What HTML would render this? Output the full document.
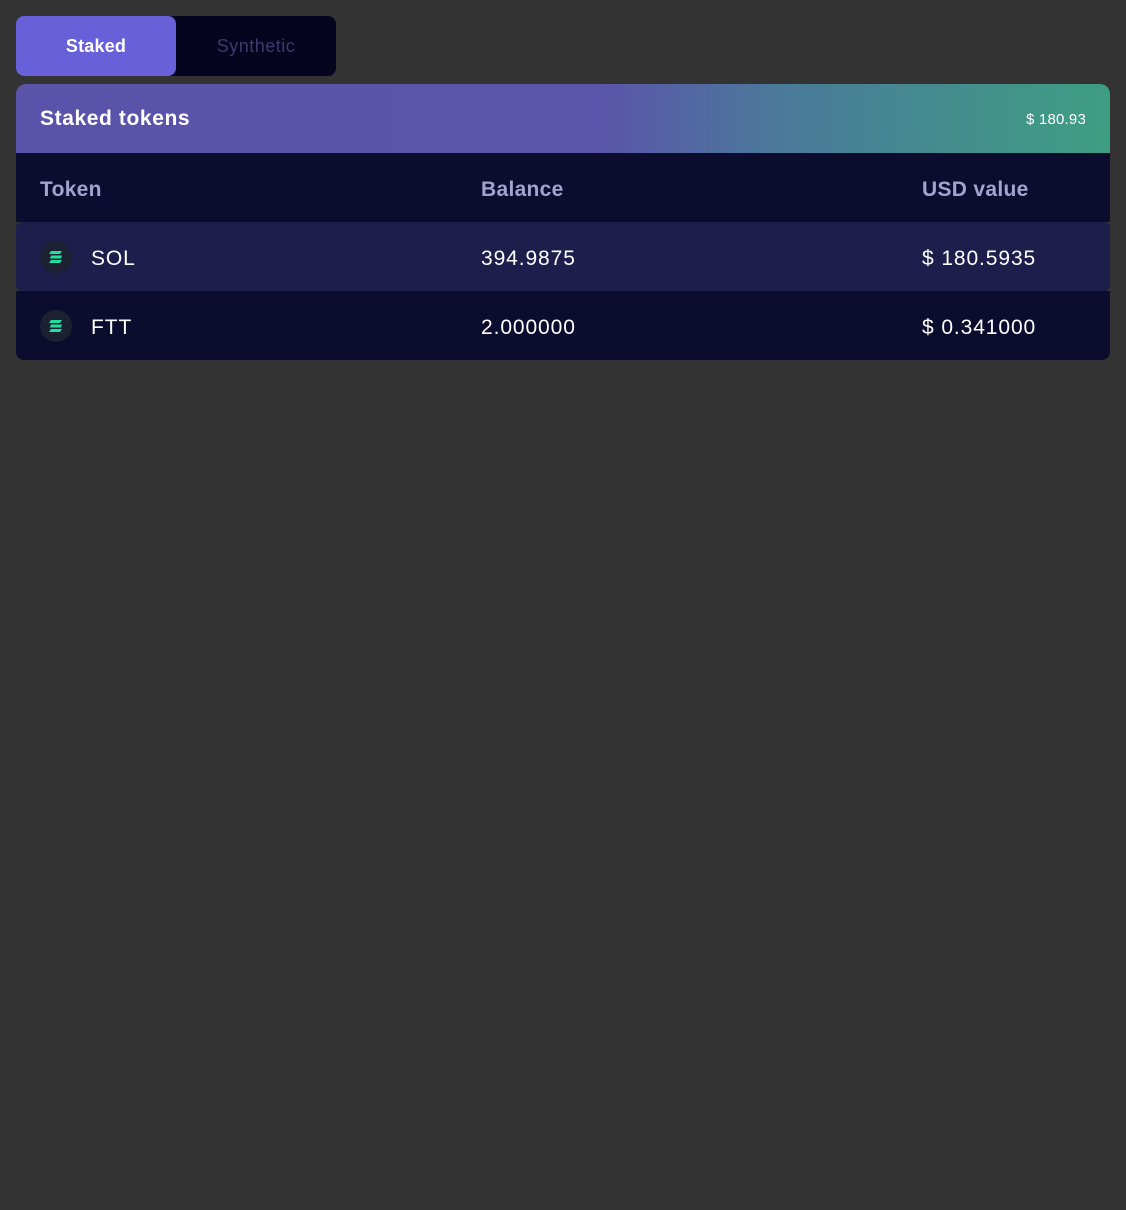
<!DOCTYPE html>
<html><head><style>
body{margin:0;background:#333333;width:1126px;height:1210px;font-family:"Liberation Sans",sans-serif;position:relative}
.tabs{position:absolute;left:16px;top:16px;width:320px;height:60px;background:#06051f;border-radius:8px}
.tab{position:absolute;top:0;width:160px;height:60px;line-height:61px;text-align:center;font-size:18px;border-radius:8px}
.t1{left:0;background:#6860d8;color:#fff;font-weight:bold;letter-spacing:0.2px}
.t2{left:160px;color:#3d3a6e;letter-spacing:0.5px}
.card{position:absolute;left:16px;top:84px;width:1094px}
.hd{height:69px;border-radius:10px 10px 0 0;background:linear-gradient(90deg,#5b52aa 0%,#5b54aa 53%,#4a7a9a 70%,#3e9e82 100%);position:relative}
.hd .t{position:absolute;left:24px;top:23px;color:#fff;font-weight:bold;font-size:21px;letter-spacing:0.6px}
.hd .v{position:absolute;right:24px;top:27px;color:#fff;font-size:15px;letter-spacing:0.2px}
.row{height:69px;position:relative;font-size:21px;letter-spacing:0.9px}
.row span{position:absolute;top:25px}
.th{background:#0c0d2e;color:#a3a3cf;font-weight:bold;letter-spacing:0.3px}
.r1{background:#1e1e4c;color:#fff;border-radius:6px}
.r2{background:#0c0d2e;color:#fff;border-radius:0 0 8px 8px}
.ic{position:absolute;left:24px;top:19px;width:32px;height:32px;border-radius:50%;background:#1c2030}
</style></head><body>
<div class="tabs"><div class="tab t1">Staked</div><div class="tab t2">Synthetic</div></div>
<div class="card">
<div class="hd"><div class="t">Staked tokens</div><div class="v">$ 180.93</div></div>
<div class="row th"><span style="left:24px">Token</span><span style="left:465px">Balance</span><span style="left:906px">USD value</span></div>
<div class="row r1"><div class="ic"><svg width="32" height="32"><g fill="#20e0a0"><polygon points="11,10 22,10 20,13 9,13"/><polygon points="11,14.5 22,14.5 21,17.5 10,17.5"/><polygon points="11,19 22,19 20,22 9,22"/></g></svg></div><span style="left:75px">SOL</span><span style="left:465px">394.9875</span><span style="left:906px">$ 180.5935</span></div>
<div class="row r2"><div class="ic"><svg width="32" height="32"><g fill="#20e0a0"><polygon points="11,10 22,10 20,13 9,13"/><polygon points="11,14.5 22,14.5 21,17.5 10,17.5"/><polygon points="11,19 22,19 20,22 9,22"/></g></svg></div><span style="left:75px">FTT</span><span style="left:465px">2.000000</span><span style="left:906px">$ 0.341000</span></div>
</div>
</body></html>
